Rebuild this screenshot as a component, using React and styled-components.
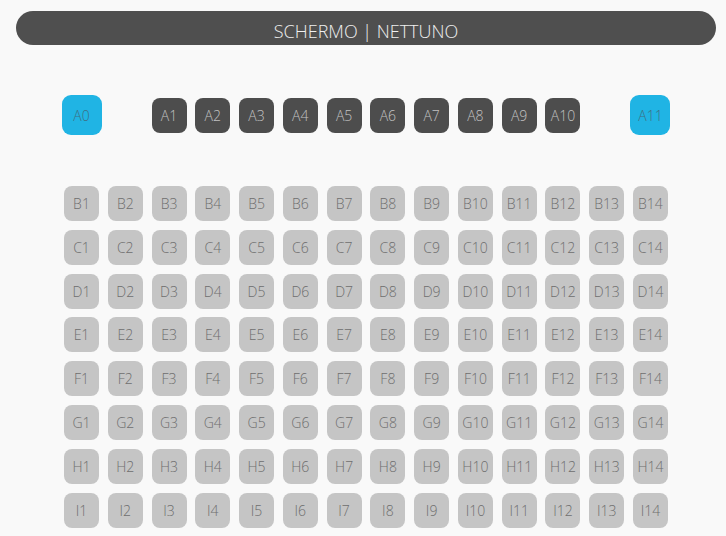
import React from "react";
import styled, { createGlobalStyle, css } from "styled-components";

const GlobalStyle = createGlobalStyle`
  body {
    margin: 0;
    background: #f9f9f9;
    font-family: "Open Sans", "Liberation Sans", sans-serif;
  }
`;

const Page = styled.div`
  width: 726px;
  height: 536px;
  overflow: hidden;
`;

const Screen = styled.div`
  box-sizing: border-box;
  margin: 11px 10px 0 16px;
  height: 34px;
  padding-top: 6px;
  border-radius: 17px;
  background: #4f4f4f;
  color: #f0f0f0;
  font-size: 18px;
  font-weight: 300;
  display: flex;
  align-items: center;
  justify-content: center;
`;

const Hall = styled.div`
  padding: 0 0 0 64px;
`;

const SeatRow = styled.div`
  display: grid;
  grid-template-columns: repeat(14, 35px);
  column-gap: 8.77px;
  align-items: center;
  justify-items: center;
  ${(p) =>
    p.$front &&
    css`
      margin-top: 50px;
      height: 40px;
      margin-bottom: 51px;
    `}
`;

const Grid = styled.div`
  display: grid;
  grid-template-columns: repeat(14, 35px);
  gap: 8.8px 8.77px;
`;

const Seat = styled.div`
  width: 35px;
  height: 35px;
  border-radius: 8px;
  display: flex;
  align-items: center;
  justify-content: center;
  font-size: 14px;
  font-weight: 300;
  background: #c5c5c5;
  color: #6e6e6e;
  ${(p) =>
    p.$kind === "dark" &&
    css`
      background: #4d4d4d;
      color: #c2c2c2;
    `}
  ${(p) =>
    p.$kind === "vip" &&
    css`
      width: 40px;
      height: 40px;
      margin: 0 -2.5px;
      border-radius: 9px;
      background: #20b4e4;
      color: #3f6e82;
    `}
`;

const rows = ["B", "C", "D", "E", "F", "G", "H", "I"];
const cols = Array.from({ length: 14 }, (_, i) => i + 1);

function App() {
  return (
    <Page>
      <GlobalStyle />
      <Screen>SCHERMO | NETTUNO</Screen>
      <Hall>
        <SeatRow $front>
          <Seat $kind="vip">A0</Seat>
          <span />
          {Array.from({ length: 10 }, (_, i) => (
            <Seat key={i} $kind="dark">
              A{i + 1}
            </Seat>
          ))}
          <span />
          <Seat $kind="vip">A11</Seat>
        </SeatRow>
        <Grid>
          {rows.map((r) =>
            cols.map((c) => (
              <Seat key={r + c}>
                {r}
                {c}
              </Seat>
            ))
          )}
        </Grid>
      </Hall>
    </Page>
  );
}

export default App;
